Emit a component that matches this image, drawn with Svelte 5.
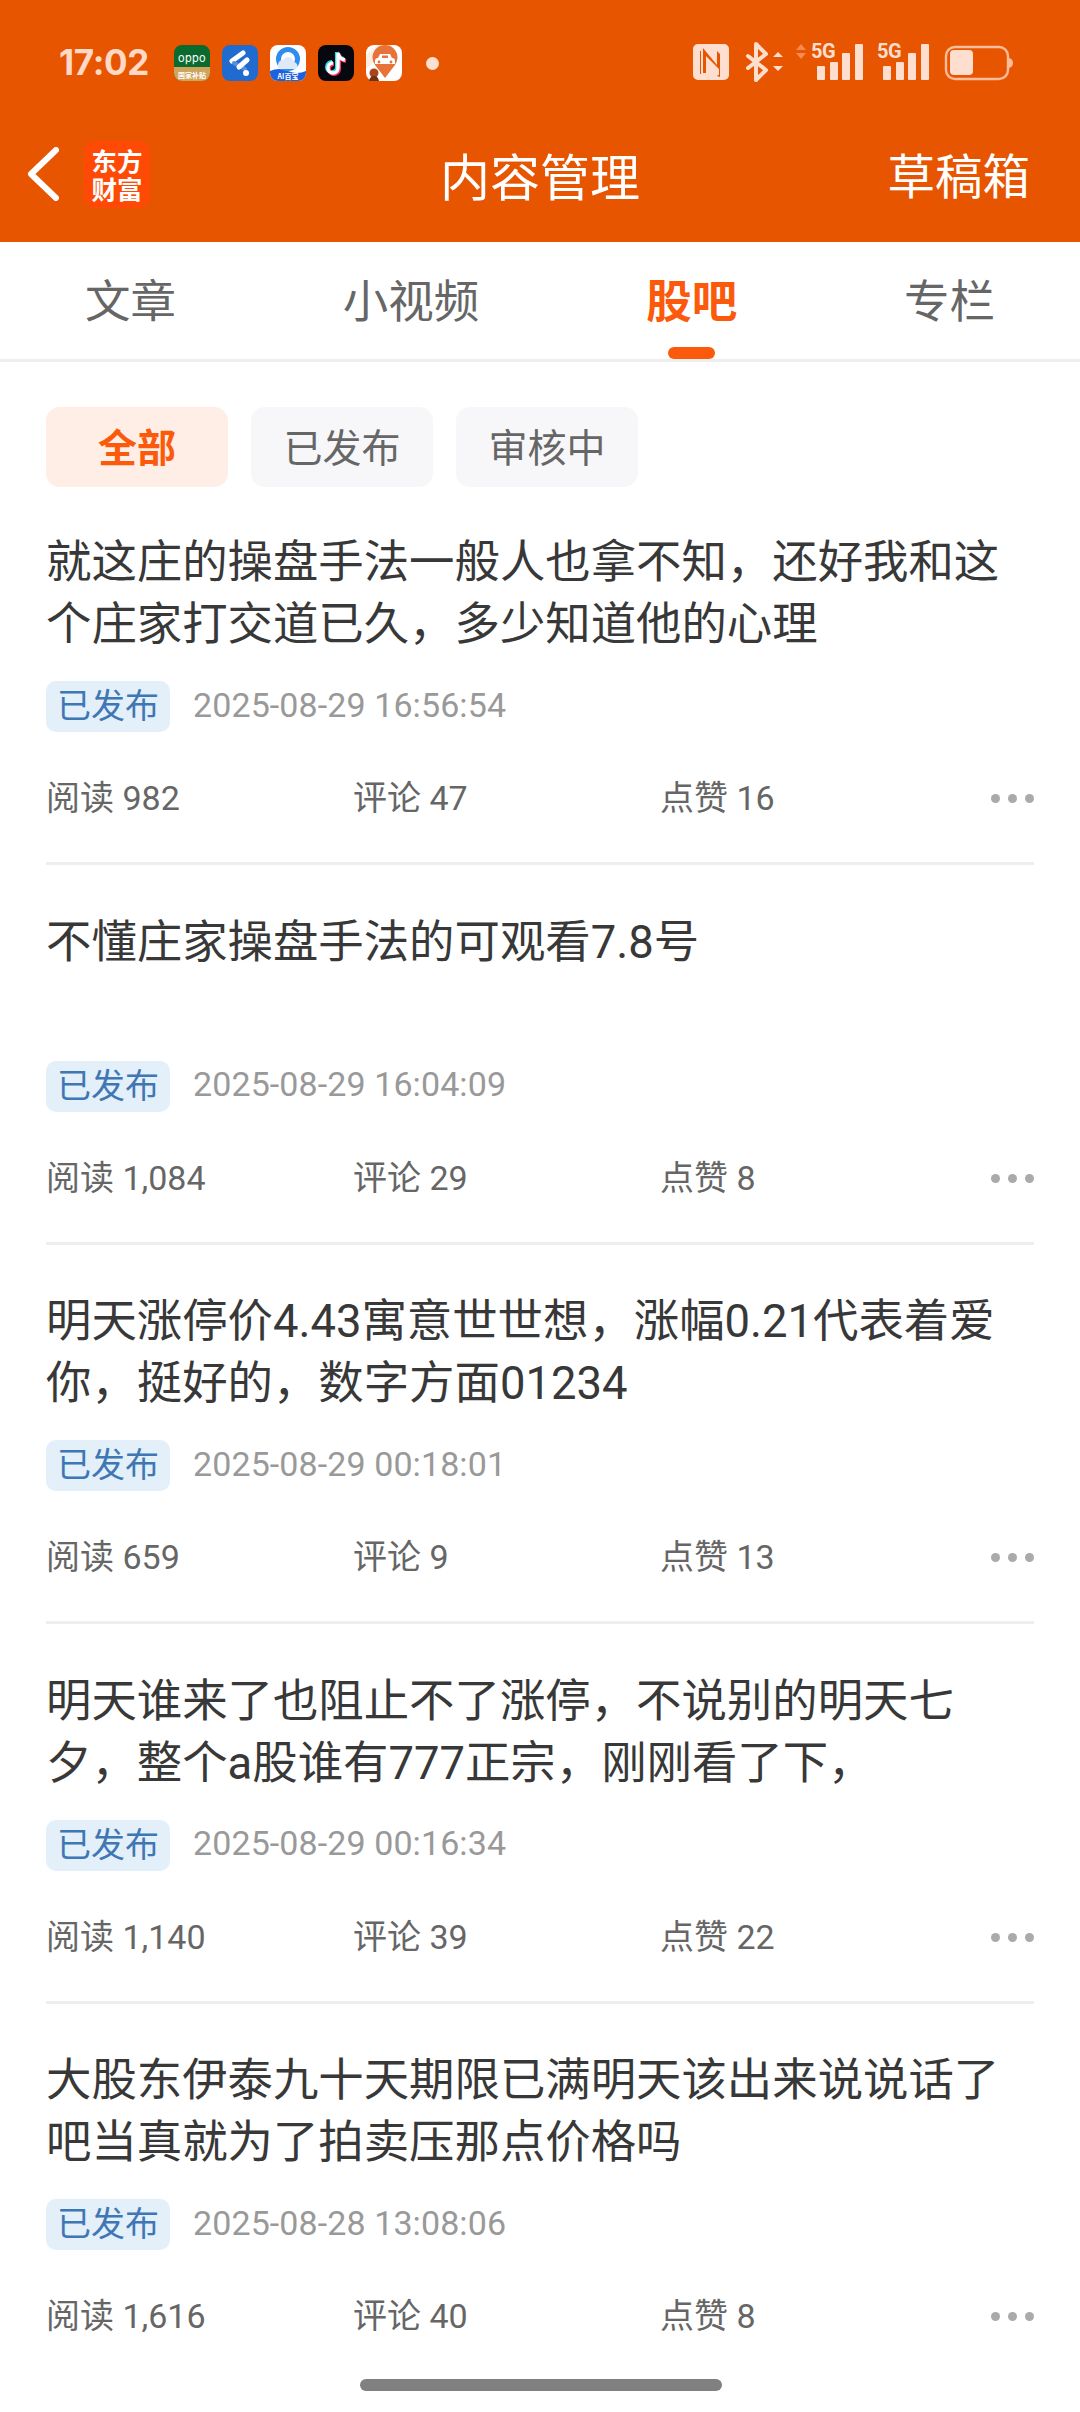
<script>
  const tabs = [
    { label: '文章' },
    { label: '小视频' },
    { label: '股吧', active: true },
    { label: '专栏' }
  ];
  const filters = [
    { label: '全部', active: true },
    { label: '已发布' },
    { label: '审核中' }
  ];
  const posts = [
    { title: '就这庄的操盘手法一般人也拿不知，还好我和这个庄家打交道已久，多少知道他的心理', date: '2025-08-29 16:56:54', read: '982', comment: '47', like: '16' },
    { title: '不懂庄家操盘手法的可观看7.8号', date: '2025-08-29 16:04:09', read: '1,084', comment: '29', like: '8' },
    { title: '明天涨停价4.43寓意世世想，涨幅0.21代表着爱你，挺好的，数字方面01234', date: '2025-08-29 00:18:01', read: '659', comment: '9', like: '13' },
    { title: '明天谁来了也阻止不了涨停，不说别的明天七夕，整个a股谁有777正宗，刚刚看了下，', date: '2025-08-29 00:16:34', read: '1,140', comment: '39', like: '22' },
    { title: '大股东伊泰九十天期限已满明天该出来说说话了吧当真就为了拍卖压那点价格吗', date: '2025-08-28 13:08:06', read: '1,616', comment: '40', like: '8' }
  ];
  const bars = [
    { x: 6, h: 14 },
    { x: 19, h: 18 },
    { x: 31, h: 27 },
    { x: 44, h: 36 }
  ];
</script>

<div class="screen">
  <header class="top">
    <div class="status">
      <span class="time">17:02</span>
      <div class="apps">
        <svg class="app" viewBox="0 0 36 36">
          <rect width="36" height="36" rx="8" fill="#0b6b2f" />
          <path d="M0 22h36v6a8 8 0 0 1-8 8H8a8 8 0 0 1-8-8z" fill="#cfa45c" />
          <text x="18" y="17" class="t-oppo">oppo</text>
          <text x="18" y="33" class="t-mini">国家补贴</text>
        </svg>
        <svg class="app" viewBox="0 0 36 36">
          <rect width="36" height="36" rx="8" fill="#1f6bd0" />
          <path d="M10 16 21 8" stroke="#fff" stroke-width="5" stroke-linecap="round" />
          <path d="M12 18 23 24" stroke="#5a8fdc" stroke-width="4" stroke-linecap="round" />
          <path d="M17 22 25 15" stroke="#fff" stroke-width="5" stroke-linecap="round" />
          <circle cx="24" cy="28" r="3" fill="#fff" />
        </svg>
        <svg class="app" viewBox="0 0 36 36">
          <rect width="36" height="36" rx="8" fill="#fff" />
          <path d="M0 26q9-4 18 0t18 0v2a8 8 0 0 1-8 8H8a8 8 0 0 1-8-8z" fill="#1c62de" />
          <circle cx="18" cy="14" r="9.5" fill="none" stroke="#2f8df0" stroke-width="5" />
          <path d="M10 24a5 5 0 0 1 3-9 6 6 0 0 1 11 2 4 4 0 0 1 2 7z" fill="#dfeaf6" />
          <text x="18" y="33.5" class="t-mini">AI百宝</text>
        </svg>
        <svg class="app" viewBox="0 0 36 36">
          <rect width="36" height="36" rx="8" fill="#07070f" />
          <path d="M20 8v15a5 5 0 1 1-5-5M20 8q1 6 7 7" fill="none" stroke="#25e0e6" stroke-width="4" transform="translate(-1 -1)" />
          <path d="M20 8v15a5 5 0 1 1-5-5M20 8q1 6 7 7" fill="none" stroke="#f8325c" stroke-width="4" transform="translate(1 1)" />
          <path d="M20 8v15a5 5 0 1 1-5-5M20 8q1 6 7 7" fill="none" stroke="#fff" stroke-width="3.4" />
        </svg>
        <svg class="app" viewBox="0 0 36 36">
          <rect width="36" height="36" rx="8" fill="#fff" />
          <path d="M0 10 12 0h14L0 24z" fill="#fbeee2" />
          <path d="M19 33 9 20a12.5 12.5 0 1 1 20 0z" fill="#e8733a" />
          <path d="M9 16q0-3 3-3l2-4h10l2 4q3 0 3 3v3H9z" fill="#fff" />
          <rect x="16" y="10.5" width="6" height="2.5" fill="#e8733a" />
          <circle cx="13" cy="17" r="1.4" fill="#e8733a" />
          <circle cx="25" cy="17" r="1.4" fill="#e8733a" />
          <circle cx="8" cy="28" r="4.5" fill="#a8451c" />
          <path d="M3 36q1-5 5-5t5 5z" fill="#6e3316" />
        </svg>
      </div>
      <span class="dot"></span>
      <svg class="sys" viewBox="0 -6 330 50" aria-hidden="true">
        <path fill="#fedfcf" fill-rule="evenodd" d="M5 0h26a5 5 0 0 1 5 5v26a5 5 0 0 1-5 5H5a5 5 0 0 1-5-5V5a5 5 0 0 1 5-5zM10 4v25h3V12l13 13V31h-1l-1 1 3 1V10l-3-3v14L10 4zM7 7v23h1V7z" />
        <path d="M55 12 73 26 63 36V0l10 10L55 24" fill="none" stroke="#fedfcf" stroke-width="4" stroke-linejoin="round" stroke-linecap="round" />
        <path d="M80 13l5-5 5 5zM80 22l5 5 5-5z" fill="#fedfcf" />
        <path d="M103 6l5-6 5 6zM103 9l5 6 5-6z" fill="#f58a55" />
        <text x="118" y="14" class="t-5g">5G</text>
        <text x="184" y="14" class="t-5g">5G</text>
        {#each bars as b}
          <rect x={118 + b.x} y={36 - b.h} width="8" height={b.h} rx="1" fill="#fedfcf" />
          <rect x={184 + b.x} y={36 - b.h} width="8" height={b.h} rx="1" fill="#fedfcf" />
        {/each}
        <rect x="253" y="3" width="62" height="32" rx="9" fill="none" stroke="#fdbd9c" stroke-width="2.4" />
        <rect x="257" y="6" width="23" height="25" rx="4" fill="#fedfcf" />
        <path d="M316 14q4 1 4 5t-4 5z" fill="#fdbd9c" />
      </svg>
    </div>

    <div class="nav">
      <svg class="back" viewBox="0 0 32 54">
        <path d="M29 3 4 27l25 24" fill="none" stroke="#fff" stroke-width="6" stroke-linecap="round" stroke-linejoin="round" />
      </svg>
      <div class="logo"><span>东方</span><span>财富</span></div>
      <h1>内容管理</h1>
      <span class="drafts">草稿箱</span>
    </div>
  </header>

  <nav class="tabs">
    {#each tabs as t}
      <span class="tab" class:on={t.active}>{t.label}</span>
    {/each}
  </nav>

  <div class="filters">
    {#each filters as f}
      <span class="pill" class:on={f.active}>{f.label}</span>
    {/each}
  </div>

  <main class="list">
    {#each posts as p}
      <article class="post">
        <p class="title">{p.title}</p>
        <div class="meta">
          <span class="badge">已发布</span>
          <span class="date">{p.date}</span>
        </div>
        <div class="stats">
          <span class="stat">阅读 {p.read}</span>
          <span class="stat">评论 {p.comment}</span>
          <span class="stat">点赞 {p.like}</span>
          <span class="more"><i></i><i></i><i></i></span>
        </div>
      </article>
    {/each}
  </main>

  <div class="home"></div>
</div>

<style>
  :global(body) {
    margin: 0;
    background: #fff;
  }
  .screen {
    position: relative;
    width: 1080px;
    height: 2412px;
    overflow: hidden;
    background: #fff;
    font-family: Roboto, "Noto Sans CJK SC", sans-serif;
  }
  .top {
    height: 242px;
    background: #e85500;
    box-sizing: border-box;
  }
  .status {
    height: 114px;
    box-sizing: border-box;
    padding: 44px 0 0 59px;
    display: flex;
    align-items: flex-start;
  }
  .time {
    width: 115px;
    height: 36px;
    line-height: 36px;
    font-size: 35px;
    font-weight: 700;
    color: #ffd9c5;
    font-family: Inter, Roboto, sans-serif;
    letter-spacing: -0.3px;
  }
  .apps {
    display: flex;
    gap: 12px;
    margin-top: 1px;
  }
  .app {
    width: 36px;
    height: 36px;
    display: block;
  }
  .t-oppo {
    font: 400 11px Inter, sans-serif;
    fill: #fff;
    text-anchor: middle;
    letter-spacing: 0.3px;
  }
  .t-mini {
    font: 700 7px "Noto Sans CJK SC", sans-serif;
    fill: #fff;
    text-anchor: middle;
  }
  .t-5g {
    font: 700 20px Roboto, sans-serif;
    fill: #fedfcf;
    letter-spacing: -0.5px;
  }
  .dot {
    width: 13px;
    height: 13px;
    border-radius: 50%;
    background: #ffdfd0;
    margin: 13px 0 0 24px;
  }
  .sys {
    width: 330px;
    height: 50px;
    margin: -6px 0 0 254px;
    display: block;
  }
  .nav {
    position: relative;
    height: 120px;
    display: flex;
    align-items: center;
    color: #fff;
    font-family: "Noto Sans CJK SC", sans-serif;
  }
  .back {
    width: 32px;
    height: 54px;
    margin: 0 0 0 27px;
    display: block;
  }
  .logo {
    width: 66px;
    height: 67px;
    margin: 0 0 0 25px;
    border-radius: 12px;
    background: #ff4a05;
    display: flex;
    flex-direction: column;
    align-items: center;
    justify-content: center;
    font-size: 25.5px;
    line-height: 28px;
    font-weight: 700;
  }
  h1 {
    position: absolute;
    left: 0;
    right: 0;
    margin: 0;
    text-align: center;
    font-size: 50px;
    font-weight: 400;
    line-height: 60px;
  }
  .drafts {
    margin-left: auto;
    margin-right: 50px;
    font-size: 47.5px;
    line-height: 60px;
  }
  .tabs {
    height: 120px;
    box-sizing: border-box;
    border-bottom: 3px solid #eeeeee;
    padding: 0 85px 5px;
    display: flex;
    justify-content: space-between;
    align-items: center;
    font-family: "Noto Sans CJK SC", sans-serif;
  }
  .tab {
    position: relative;
    font-size: 45.5px;
    line-height: 60px;
    color: #666;
  }
  .tab.on {
    color: #fb5a0c;
    font-weight: 700;
  }
  .tab.on::after {
    content: "";
    position: absolute;
    left: 22px;
    right: 22px;
    top: 79px;
    height: 12px;
    border-radius: 6px;
    background: #fb5a0c;
  }
  .filters {
    display: flex;
    gap: 23px;
    padding: 45px 46px 0;
    font-family: "Noto Sans CJK SC", sans-serif;
  }
  .pill {
    width: 182px;
    height: 80px;
    border-radius: 14px;
    background: #f7f7f9;
    color: #666;
    font-size: 39px;
    line-height: 76px;
    text-align: center;
  }
  .pill.on {
    background: #feeee6;
    color: #fb5a0c;
    font-weight: 700;
  }
  .list {
    padding: 0 46px;
    margin-top: -1.5px;
  }
  .post {
    height: 379.5px;
    box-sizing: border-box;
    padding-top: 46.5px;
    border-bottom: 3px solid #eeeeee;
  }
  .post:last-child {
    border-bottom: none;
  }
  .title {
    margin: 0;
    height: 124px;
    font-size: 45.4px;
    line-height: 62px;
    color: #383838;
  }
  .meta {
    margin-top: 25px;
    display: flex;
    align-items: center;
    gap: 23px;
    height: 51px;
  }
  .badge {
    width: 124px;
    height: 51px;
    border-radius: 10px;
    background: #e3eff9;
    color: #3f77b5;
    font-size: 34px;
    line-height: 50px;
    text-align: center;
  }
  .date {
    font-size: 34px;
    letter-spacing: 0.1px;
    color: #999;
    padding-bottom: 4px;
  }
  .stats {
    margin-top: 39px;
    height: 50px;
    display: grid;
    grid-template-columns: 307px 307px 1fr auto;
    align-items: center;
    font-size: 34px;
    color: #666;
  }
  .stat {
    padding-bottom: 6px;
  }
  .more {
    display: flex;
    gap: 8px;
  }
  .more i {
    width: 9px;
    height: 9px;
    border-radius: 50%;
    background: #aaa;
  }
  .home {
    position: absolute;
    left: 360px;
    top: 2379px;
    width: 362px;
    height: 12px;
    border-radius: 6px;
    background: #808080;
  }
</style>
